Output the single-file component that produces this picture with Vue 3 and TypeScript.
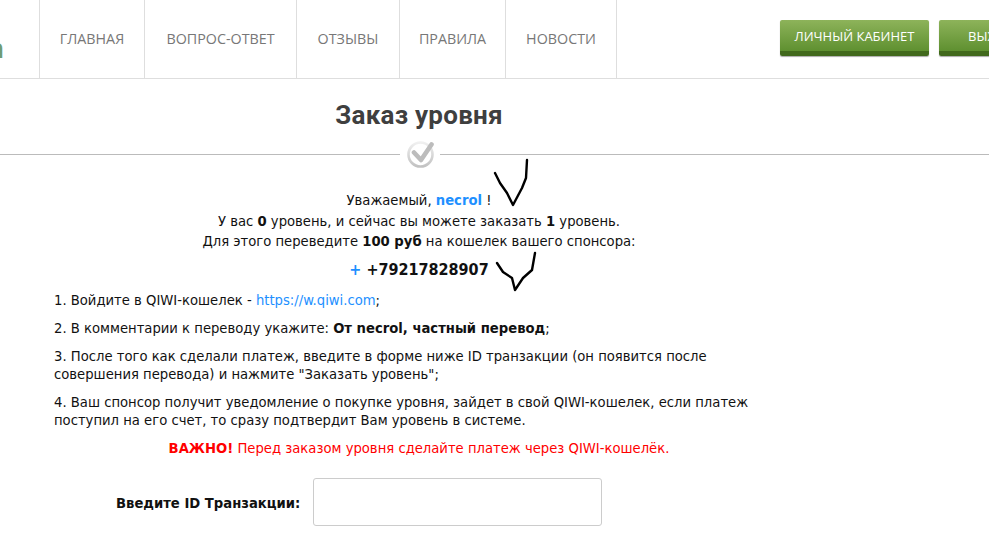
<script setup lang="ts">
const nav: { label: string; width: number }[] = [
  { label: 'ГЛАВНАЯ', width: 105 },
  { label: 'ВОПРОС-ОТВЕТ', width: 152 },
  { label: 'ОТЗЫВЫ', width: 103 },
  { label: 'ПРАВИЛА', width: 106 },
  { label: 'НОВОСТИ', width: 111 },
]
</script>

<template>
  <div class="page">
    <header class="top">
      <div class="logo"><span class="logo-n">n</span></div>
      <nav class="nav">
        <a v-for="n in nav" :key="n.label" class="nav-item" :style="{ width: n.width + 'px' }">{{ n.label }}</a>
      </nav>
      <div class="btns">
        <a class="btn">ЛИЧНЫЙ КАБИНЕТ</a>
        <a class="btn btn-exit">ВЫХОД</a>
      </div>
    </header>

    <h1 class="title">Заказ уровня</h1>
    <div class="divider">
      <span class="rule rule-left"></span>
      <span class="check">
        <svg width="27" height="27" viewBox="0 0 27 27">
          <defs>
            <linearGradient id="ring" x1="0" y1="0" x2="0" y2="1">
              <stop offset="0" stop-color="#f0f0f0" />
              <stop offset="1" stop-color="#c2c2c2" />
            </linearGradient>
          </defs>
          <circle cx="13.5" cy="13.5" r="12" fill="#fff" stroke="url(#ring)" stroke-width="2.6" />
          <path d="M7 11.5l7 7.5L24.5 3.5" fill="none" stroke="#bcbcbc" stroke-width="4.6" stroke-linejoin="round" stroke-linecap="round" />
        </svg>
      </span>
      <span class="rule"></span>
    </div>

    <div class="column">
      <section class="intro">
        <p>Уважаемый, <b class="blue">necrol</b> !</p>
        <p>У вас <b>0</b> уровень, и сейчас вы можете заказать <b>1</b> уровень.</p>
        <p>Для этого переведите <b>100 руб</b> на кошелек вашего спонсора:</p>
        <p class="phone"><b><span class="blue">+</span> +79217828907</b></p>
      </section>

      <section class="steps">
        <p>1. Войдите в QIWI-кошелек - <a class="link">https://w.qiwi.com</a>;</p>
        <p>2. В комментарии к переводу укажите: <b>От necrol, частный перевод</b>;</p>
        <p>3. После того как сделали платеж, введите в форме ниже ID транзакции (он появится после<br />совершения перевода) и нажмите "Заказать уровень";</p>
        <p>4. Ваш спонсор получит уведомление о покупке уровня, зайдет в свой QIWI-кошелек, если платеж<br />поступил на его счет, то сразу подтвердит Вам уровень в системе.</p>
      </section>

      <p class="warn"><b>ВАЖНО!</b> Перед заказом уровня сделайте платеж через QIWI-кошелёк.</p>

      <form class="form" @submit.prevent>
        <label class="label" for="tid">Введите ID Транзакции:</label>
        <input id="tid" class="input" type="text" />
      </form>
    </div>

    <svg class="scribble s1" width="40" height="52" viewBox="0 0 40 52">
      <path d="M5 18L10 28L17 38L23 50L32 33L36 23L37 5" fill="none" stroke="#000" stroke-width="2.4" stroke-linejoin="round" stroke-linecap="round" />
    </svg>
    <svg class="scribble s2" width="46" height="46" viewBox="0 0 46 46">
      <path d="M5 15L11 24L20 30L23 42L31 30L40 22L43 5" fill="none" stroke="#000" stroke-width="2.4" stroke-linejoin="round" stroke-linecap="round" />
    </svg>
  </div>
</template>

<style>
html, body { margin: 0; background: #fff; overflow: hidden; }
</style>

<style scoped>
.page {
  position: relative;
  width: 989px;
  height: 537px;
  overflow: hidden;
  background: #fff;
  color: #111;
  font-family: "DejaVu Sans Condensed", "DejaVu Sans", sans-serif;
  font-size: 14.67px;
}
p { margin: 0; }
.top {
  display: flex;
  height: 78px;
  border-bottom: 1px solid #dedede;
  font-family: "Open Sans", sans-serif;
}
.logo {
  flex: 0 0 39px;
  height: 78px;
  position: relative;
  overflow: hidden;
  border-right: 1px solid #dedede;
}
.logo-n {
  position: absolute;
  left: -13px;
  top: 32px;
  font-size: 26px;
  line-height: 32px;
  font-weight: 700;
  color: #6f9c74;
}
.nav { display: flex; }
.nav-item {
  box-sizing: border-box;
  display: flex;
  align-items: center;
  justify-content: center;
  padding-bottom: 2px;
  border-right: 1px solid #dedede;
  color: #777;
  font-size: 14.3px;
  white-space: nowrap;
}
.btns {
  display: flex;
  margin-left: auto;
  gap: 10px;
  padding-top: 20px;
  flex: none;
  width: 209px;
}
.btn {
  box-sizing: border-box;
  flex: none;
  width: 149px;
  height: 36px;
  display: flex;
  align-items: center;
  justify-content: center;
  padding-top: 1px;
  color: #fff;
  font-size: 13px;
  background: linear-gradient(#8db35a, #5f9030);
  border-radius: 2px;
  border-bottom: 5px solid #41691c;
  box-shadow: 0 1px 1px #aaa;
  white-space: nowrap;
}
.btn-exit { width: 104px; }
.title {
  margin: 21px 0 0;
  width: 838px;
  height: 31px;
  line-height: 31px;
  text-align: center;
  font-family: Roboto, "Open Sans", sans-serif;
  font-size: 26px;
  font-weight: 700;
  letter-spacing: 0.25px;
  color: #3f3f3f;
}
.divider {
  margin-top: 9px;
  height: 29px;
  display: flex;
  align-items: center;
}
.rule {
  flex: 1;
  height: 1px;
  background: #bbb;
}
.rule-left { flex: 0 0 400px; }
.check {
  flex: 0 0 39px;
  display: flex;
  justify-content: center;
  margin-left: 1px;
}
.check svg { display: block; }
.column { width: 838px; }
.intro {
  margin-top: 21px;
  text-align: center;
  line-height: 20.5px;
}
.blue { color: #1e90ff; }
.phone { margin-top: 8.5px; font-size: 16px; line-height: 20px; }
.steps {
  margin: 11px 0 0 54px;
  width: 720px;
  line-height: 18px;
}
.steps p { margin-bottom: 10px; }
.link { color: #1e90ff; }
.warn { text-align: center; color: #f00; line-height: 18px; }
.form {
  display: flex;
  align-items: center;
  margin: 21px 0 0 116px;
}
.label { flex: 0 0 197px; font-weight: 700; color: #111; }
.input {
  box-sizing: border-box;
  width: 289px;
  height: 48px;
  border: 1px solid #ccc;
  border-radius: 3px;
  background: #fff;
  padding: 0 10px;
}
.scribble { position: absolute; pointer-events: none; }
.s1 { left: 490px; top: 155px; }
.s2 { left: 492px; top: 248px; }
</style>
